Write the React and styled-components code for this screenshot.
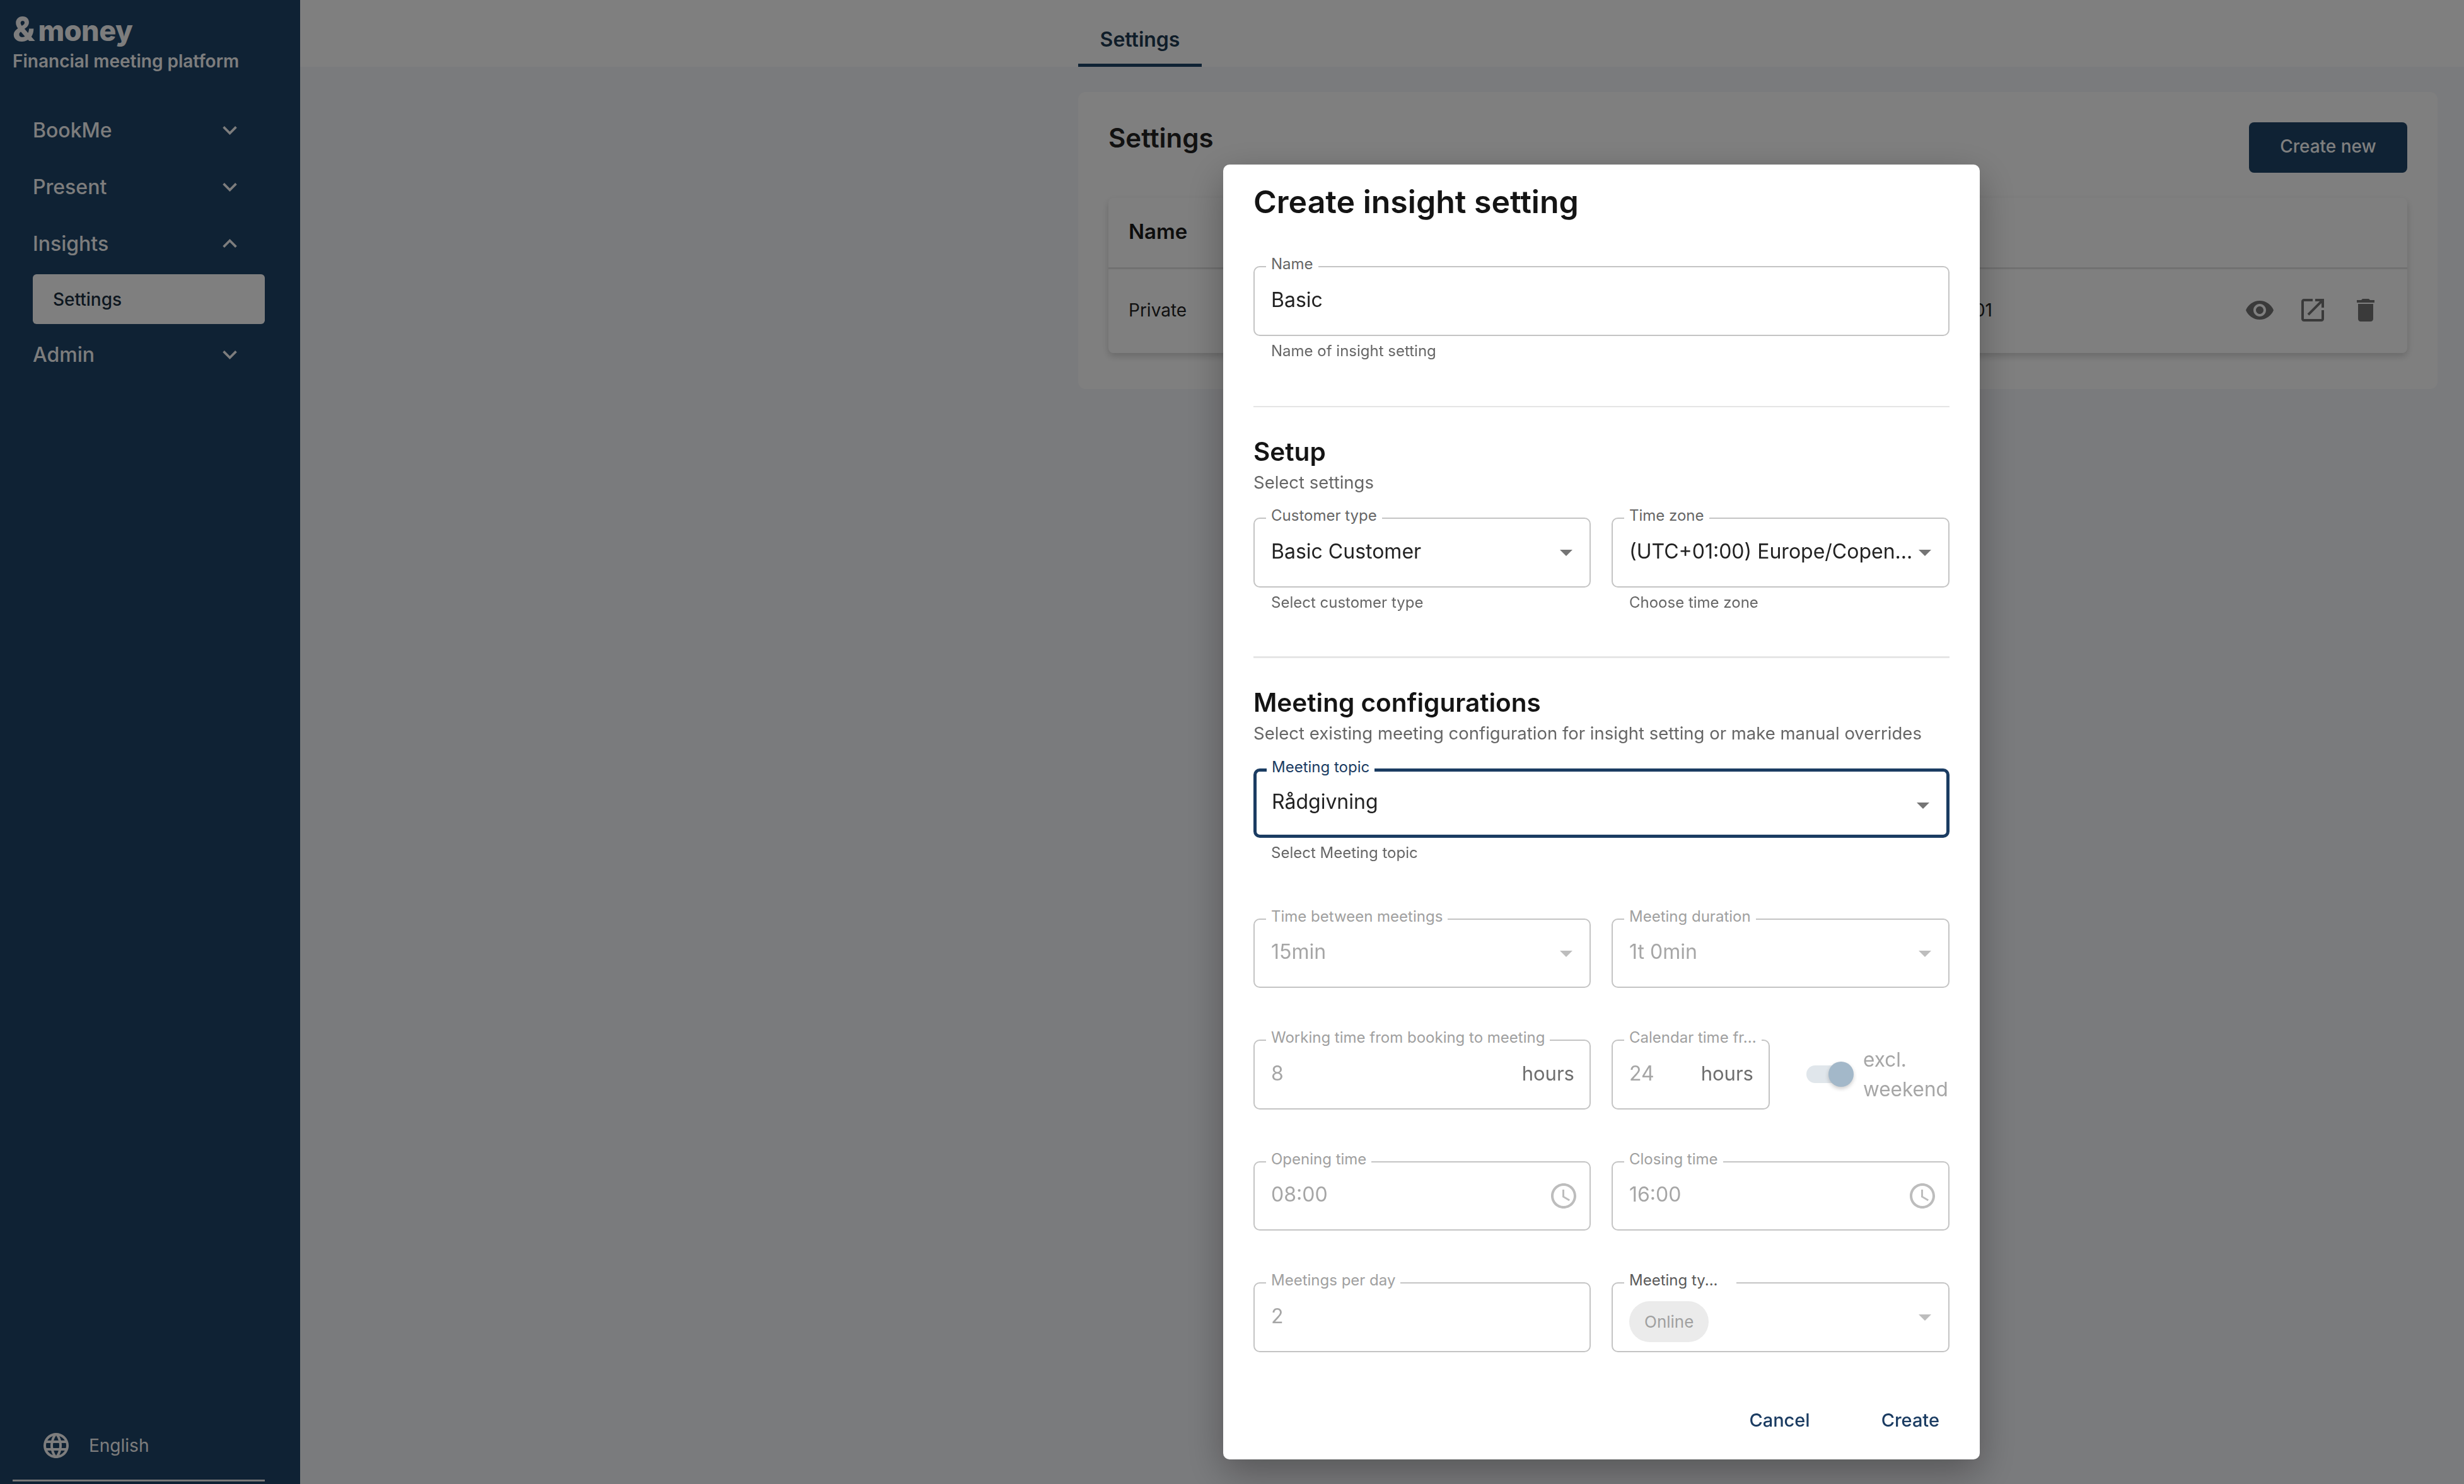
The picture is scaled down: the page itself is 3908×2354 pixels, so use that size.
import React from 'react'
import styled, { createGlobalStyle } from 'styled-components'

const GlobalStyle = createGlobalStyle`
  html, body { margin: 0; padding: 0; background: #f5f6fa; }
  body { font-family: "Inter", "Liberation Sans", sans-serif; }
  * { box-sizing: border-box; }
`

const Page = styled.div`
  display: flex;
  width: 100%;
  height: 100vh;
  overflow: hidden;
  background: #f5f6fa;
`
const Sidebar = styled.aside`
  width: 476px;
  flex: none;
  display: flex;
  flex-direction: column;
  background: #1e4468;
  color: #fafafa;
  padding: 0 56px 0 20px;
`
const Logo = styled.div`
  margin-top: 16px;
  height: 63px;
  display: flex;
  align-items: baseline;
  gap: 5px;
  font-weight: 800;
  line-height: 62px;
`
const Ampersand = styled.span`
  font-size: 52px;
`
const Wordmark = styled.span`
  font-size: 45px;
  letter-spacing: -0.5px;
`
const Tagline = styled.div`
  font-size: 28px;
  line-height: 36px;
  font-weight: 600;
`
const Nav = styled.nav`
  margin-top: 46px;
  padding-left: 32px;
  display: flex;
  flex-direction: column;
`
const NavItem = styled.div`
  height: 90px;
  display: flex;
  align-items: center;
  justify-content: space-between;
  font-size: 32px;
  font-weight: 500;
  svg { width: 45px; height: 45px; fill: currentColor; margin-right: 33px; }
`
const SubItem = styled.div`
  height: 79px;
  margin: 4px 0 3px;
  width: 368px;
  background: #fff;
  border-radius: 6px;
  display: flex;
  align-items: center;
  padding-left: 32px;
  font-size: 28px;
  font-weight: 500;
  color: #1b2f40;
`
const Language = styled.div`
  margin-top: auto;
  display: flex;
  align-items: center;
  gap: 28px;
  padding: 0 0 30px 45px;
  font-size: 28px;
  svg { width: 48px; height: 48px; fill: currentColor; }
`
const LanguageRule = styled.div`
  height: 3px;
  width: 400px;
  background: #f0f0f0;
  margin-bottom: 4px;
`
const Main = styled.main`
  flex: 1;
  min-width: 0;
`
const TopBar = styled.div`
  height: 106px;
  background: #fff;
  padding-left: 1234px;
  display: flex;
`
const Tab = styled.div`
  width: 196px;
  text-align: center;
  font-size: 32px;
  font-weight: 600;
  line-height: 126px;
  height: 106px;
  color: #1e3a52;
  border-bottom: 5px solid #1e4468;
`
const Card = styled.section`
  width: 2156px;
  height: 471px;
  margin: 40px 0 0 1234px;
  padding: 48px 48px 0 48px;
  background: #fff;
  border-radius: 12px;
`
const CardHeader = styled.div`
  display: flex;
  justify-content: space-between;
  height: 120px;
`
const CardTitle = styled.h2`
  margin: 0;
  font-size: 42px;
  font-weight: 600;
  line-height: 50px;
  color: #222;
`
const PrimaryButton = styled.button`
  width: 251px;
  height: 80px;
  padding: 0 0 4px;
  border: 0;
  border-radius: 8px;
  background: #1e4468;
  color: #fff;
  font: 500 28px "Inter", sans-serif;
`
const Table = styled.div`
  border-radius: 8px;
  box-shadow: 0 5px 12px rgba(0, 0, 0, 0.18);
`
const HeadRow = styled.div`
  height: 113px;
  padding: 0 0 4px 32px;
  display: flex;
  align-items: center;
  border-bottom: 3px solid #e2e2e2;
  font-size: 33px;
  font-weight: 600;
  color: #1a1a1a;
`
const BodyRow = styled.div`
  height: 133px;
  padding: 0 42px 4px 32px;
  display: flex;
  align-items: center;
  justify-content: space-between;
  font-size: 28px;
  color: #222;
`
const DateCell = styled.span`
  margin-left: auto;
  margin-right: 400px;
`
const Actions = styled.div`
  display: flex;
  gap: 36px;
  svg { width: 48px; height: 48px; fill: #757575; display: block; }
`
const Backdrop = styled.div`
  position: fixed;
  inset: 0;
  background: rgba(0, 0, 0, 0.5);
`
const Dialog = styled.div`
  position: absolute;
  left: 1940px;
  top: 261px;
  width: 1200px;
  height: 2054px;
  background: #fff;
  border-radius: 10px;
  padding: 29px 48px 0;
  box-shadow: 0 20px 60px rgba(0, 0, 0, 0.3);
`
const DialogTitle = styled.h1`
  margin: 0 0 72px;
  font-size: 50px;
  line-height: 60px;
  font-weight: 600;
  color: #141414;
`
const Outline = styled.div`
  position: relative;
  height: 110.5px;
  width: ${p => p.$width || '100%'};
  flex: none;
  border: ${p => (p.$focused ? '5px solid #1b3c62' : '2.5px solid #c4c4c4')};
  border-radius: 10px;
  display: flex;
  align-items: center;
  justify-content: space-between;
  padding: ${p => (p.$focused ? '0 19px 4px 24px' : '0 21px 4px 26px')};
  font-size: 32px;
  white-space: nowrap;
  color: ${p => (p.$disabled ? '#a6a6a6' : '#222')};
`
const Label = styled.label`
  position: absolute;
  top: ${p => (p.$focused ? '-22px' : '-20px')};
  left: ${p => (p.$focused ? '16px' : '18px')};
  padding: 0 ${p => p.$notch || 8}px 0 8px;
  background: #fff;
  font-size: 24px;
  line-height: 30px;
  color: ${p => p.$color};
  white-space: nowrap;
`
const Caret = styled.svg`
  position: absolute;
  right: 13px;
  top: 29px;
  width: 48px;
  height: 48px;
  fill: ${p => (p.$disabled ? '#bdbdbd' : '#757575')};
`
const Clock = styled.svg`
  width: 48px;
  height: 48px;
  fill: #bdbdbd;
  margin: 4px -4px 0 0;
`
const Unit = styled.span`
  color: #6e6e6e;
  font-size: 31px;
  margin-right: 3px;
`
const Chip = styled.span`
  height: 65px;
  padding: 0 24px;
  margin-top: 18px;
  border-radius: 33px;
  background: #ebebeb;
  color: #a0a0a0;
  font-size: 26px;
  display: flex;
  align-items: center;
`
const Helper = styled.div`
  margin-top: 9px;
  padding-left: 28px;
  font-size: 24px;
  line-height: 30px;
  color: #666;
`
const Rule = styled.hr`
  margin: ${p => p.$top}px 0 0;
  border: 0;
  height: 2.5px;
  background: #e5e5e5;
`
const SectionTitle = styled.h3`
  margin: 47px 0 0;
  font-size: 40.5px;
  line-height: 48px;
  font-weight: 600;
  color: #141414;
`
const SectionText = styled.p`
  margin: 6px 0 38px;
  font-size: 27.5px;
  line-height: 36px;
  white-space: nowrap;
  color: #666;
`
const Pair = styled.div`
  display: grid;
  grid-template-columns: 535px 536px;
  column-gap: 33px;
  margin-top: ${p => p.$top || 0}px;
`
const InlineGroup = styled.div`
  display: flex;
  align-items: center;
`
const Toggle = styled.div`
  position: relative;
  width: 60px;
  height: 28px;
  margin: 0 30px 0 58px;
  flex: none;
  background: #e0e6eb;
  border-radius: 14px;
`
const Thumb = styled.span`
  position: absolute;
  right: -15px;
  top: -6px;
  width: 40px;
  height: 40px;
  border-radius: 50%;
  background: #a3b8c9;
  box-shadow: 0 3px 6px rgba(0, 0, 0, 0.2);
`
const ToggleText = styled.span`
  font-size: 31.5px;
  line-height: 47px;
  color: #a6a6a6;
`
const Footer = styled.div`
  display: flex;
  justify-content: flex-end;
  gap: 113px;
  margin-top: 90px;
  padding-right: 16px;
`
const TextButton = styled.button`
  border: 0;
  padding: 0;
  background: none;
  font: 500 29px/36px "Inter", sans-serif;
  color: #1b3c62;
`

const Icon = ({ d }) => (
  <svg viewBox="0 0 24 24"><path d={d} /></svg>
)

const PATHS = {
  more: 'M16.59 8.59 12 13.17 7.41 8.59 6 10l6 6 6-6z',
  less: 'm12 8-6 6 1.41 1.41L12 10.83l4.59 4.58L18 14z',
  globe: 'M11.99 2C6.47 2 2 6.48 2 12s4.47 10 9.99 10C17.52 22 22 17.52 22 12S17.52 2 11.99 2zm6.93 6h-2.95c-.32-1.25-.78-2.45-1.38-3.56 1.84.63 3.37 1.91 4.33 3.56zM12 4.04c.83 1.2 1.48 2.53 1.91 3.96h-3.82c.43-1.43 1.08-2.76 1.91-3.96zM4.26 14C4.1 13.36 4 12.69 4 12s.1-1.36.26-2h3.38c-.08.66-.14 1.32-.14 2 0 .68.06 1.34.14 2H4.26zm.82 2h2.95c.32 1.25.78 2.45 1.38 3.56-1.84-.63-3.37-1.9-4.33-3.56zm2.95-8H5.08c.96-1.66 2.49-2.93 4.33-3.56C8.81 5.55 8.35 6.75 8.03 8zM12 19.96c-.83-1.2-1.48-2.53-1.91-3.96h3.82c-.43 1.43-1.08 2.76-1.91 3.96zM14.34 14H9.66c-.09-.66-.16-1.32-.16-2 0-.68.07-1.35.16-2h4.68c.09.65.16 1.32.16 2 0 .68-.07 1.34-.16 2zm.25 5.56c.6-1.11 1.06-2.31 1.38-3.56h2.95c-.96 1.65-2.49 2.93-4.33 3.56zM16.36 14c.08-.66.14-1.32.14-2 0-.68-.06-1.34-.14-2h3.38c.16.64.26 1.31.26 2s-.1 1.36-.26 2h-3.38z',
  eye: 'M12 4.5C7 4.5 2.73 7.61 1 12c1.73 4.39 6 7.5 11 7.5s9.27-3.11 11-7.5c-1.73-4.39-6-7.5-11-7.5zM12 17c-2.76 0-5-2.24-5-5s2.24-5 5-5 5 2.24 5 5-2.24 5-5 5zm0-8c-1.66 0-3 1.34-3 3s1.34 3 3 3 3-1.34 3-3-1.34-3-3-3z',
  open: 'M19 19H5V5h7V3H5c-1.11 0-2 .9-2 2v14c0 1.1.89 2 2 2h14c1.1 0 2-.9 2-2v-7h-2v7zM14 3v2h3.59l-9.83 9.83 1.41 1.41L19 6.41V10h2V3h-7z',
  trash: 'M6 19c0 1.1.9 2 2 2h8c1.1 0 2-.9 2-2V7H6v12zM19 4h-3.5l-1-1h-5l-1 1H5v2h14V4z',
  clock: 'M11.99 2C6.47 2 2 6.48 2 12s4.47 10 9.99 10C17.52 22 22 17.52 22 12S17.52 2 11.99 2zM12 20c-4.42 0-8-3.58-8-8s3.58-8 8-8 8 3.58 8 8-3.58 8-8 8zm.5-13H11v6l5.25 3.15.75-1.23-4.5-2.67z',
}

const Field = ({ label, children, focused, disabled, select, width, labelColor, notch }) => {
  const color = labelColor || (focused ? '#1b3c62' : disabled ? '#a0a0a0' : '#666')
  return (
    <Outline $focused={focused} $disabled={disabled} $width={width}>
      <Label $focused={focused} $color={color} $notch={notch}>{label}</Label>
      {children}
      {select && (
        <Caret $disabled={disabled} viewBox="0 0 24 24"><path d="m7 10 5 5 5-5z" /></Caret>
      )}
    </Outline>
  )
}

const App = () => (
  <>
    <GlobalStyle />
    <Page>
      <Sidebar>
        <Logo><Ampersand>&amp;</Ampersand><Wordmark>money</Wordmark></Logo>
        <Tagline>Financial meeting platform</Tagline>
        <Nav>
          <NavItem>BookMe<Icon d={PATHS.more} /></NavItem>
          <NavItem>Present<Icon d={PATHS.more} /></NavItem>
          <NavItem>Insights<Icon d={PATHS.less} /></NavItem>
          <SubItem>Settings</SubItem>
          <NavItem>Admin<Icon d={PATHS.more} /></NavItem>
        </Nav>
        <Language><Icon d={PATHS.globe} />English</Language>
        <LanguageRule />
      </Sidebar>
      <Main>
        <TopBar><Tab>Settings</Tab></TopBar>
        <Card>
          <CardHeader>
            <CardTitle>Settings</CardTitle>
            <PrimaryButton>Create new</PrimaryButton>
          </CardHeader>
          <Table>
            <HeadRow>Name</HeadRow>
            <BodyRow>
              Private
              <DateCell>01</DateCell>
              <Actions>
                <Icon d={PATHS.eye} />
                <Icon d={PATHS.open} />
                <Icon d={PATHS.trash} />
              </Actions>
            </BodyRow>
          </Table>
        </Card>
      </Main>
    </Page>
    <Backdrop>
      <Dialog>
        <DialogTitle>Create insight setting</DialogTitle>
        <Field label="Name">Basic</Field>
        <Helper>Name of insight setting</Helper>
        <Rule $top={72} />
        <SectionTitle>Setup</SectionTitle>
        <SectionText>Select settings</SectionText>
        <Pair>
          <div>
            <Field label="Customer type" select>Basic Customer</Field>
            <Helper>Select customer type</Helper>
          </div>
          <div>
            <Field label="Time zone" select>(UTC+01:00) Europe/Copen...</Field>
            <Helper>Choose time zone</Helper>
          </div>
        </Pair>
        <Rule $top={70.5} />
        <SectionTitle>Meeting configurations</SectionTitle>
        <SectionText>Select existing meeting configuration for insight setting or make manual overrides</SectionText>
        <Field label="Meeting topic" select focused>Rådgivning</Field>
        <Helper>Select Meeting topic</Helper>
        <Pair $top={88.5}>
          <Field label="Time between meetings" select disabled>15min</Field>
          <Field label="Meeting duration" select disabled>1t 0min</Field>
        </Pair>
        <Pair $top={82}>
          <Field label="Working time from booking to meeting" disabled>8<Unit>hours</Unit></Field>
          <InlineGroup>
            <Field label="Calendar time fr..." disabled width="251px">24<Unit>hours</Unit></Field>
            <Toggle><Thumb /></Toggle>
            <ToggleText>excl. weekend</ToggleText>
          </InlineGroup>
        </Pair>
        <Pair $top={82}>
          <Field label="Opening time" disabled>08:00<Clock viewBox="0 0 24 24"><path d={PATHS.clock} /></Clock></Field>
          <Field label="Closing time" disabled>16:00<Clock viewBox="0 0 24 24"><path d={PATHS.clock} /></Clock></Field>
        </Pair>
        <Pair $top={82}>
          <Field label="Meetings per day" disabled>2</Field>
          <Field label="Meeting ty..." select disabled labelColor="#5a5a5a" notch={30}><Chip>Online</Chip></Field>
        </Pair>
        <Footer>
          <TextButton>Cancel</TextButton>
          <TextButton>Create</TextButton>
        </Footer>
      </Dialog>
    </Backdrop>
  </>
)

export default App
